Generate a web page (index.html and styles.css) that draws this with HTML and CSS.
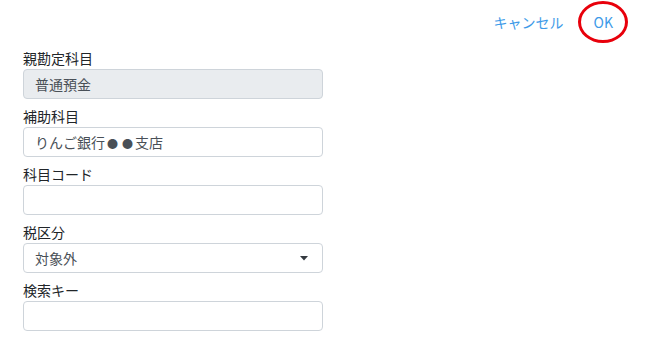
FILE: index.html
```html
<!DOCTYPE html>
<html lang="ja">
<head>
    <meta charset="UTF-8">
    <meta name="viewport" content="width=device-width, initial-scale=1.0">
    <title>補助科目</title>
    <link rel="stylesheet" href="styles.css">
</head>
<body>

<div class="toolbar">
    <button class="link-btn">キャンセル</button>
    <button class="link-btn ok">OK<span class="mark"></span></button>
</div>

<form class="form">
    <div class="group">
        <label>親勘定科目</label>
        <input type="text" class="field" value="普通預金" readonly>
    </div>
    <div class="group">
        <label>補助科目</label>
        <div class="field">りんご銀行<span class="dot">●</span><span class="dot">●</span>支店</div>
    </div>
    <div class="group">
        <label>科目コード</label>
        <input type="text" class="field">
    </div>
    <div class="group">
        <label>税区分</label>
        <div class="select">
            <span>対象外</span>
            <svg width="8" height="5" viewBox="0 0 8 5"><path d="M0 0h8L4 4.5z" fill="#343a40"/></svg>
        </div>
    </div>
    <div class="group">
        <label>検索キー</label>
        <input type="text" class="field">
    </div>
</form>

</body>
</html>
```

FILE: styles.css
```css
body {
    margin: 0;
    font-family: "Noto Sans CJK JP", "Noto Sans", sans-serif;
    font-size: 14px;
    color: #212529;
    background: #ffffff;
}
.toolbar {
    display: flex;
    justify-content: flex-end;
    align-items: center;
    height: 44px;
    padding-right: 30px;
    gap: 18px;
}
.link-btn {
    position: relative;
    border: none;
    background: none;
    padding: 0 6px;
    font-family: inherit;
    font-size: 14px;
    color: #3d9ae8;
    cursor: pointer;
}
.ok .mark {
    position: absolute;
    left: 50%;
    top: 50%;
    box-sizing: border-box;
    width: 50px;
    height: 42px;
    margin: -21px 0 0 -25px;
    border: 3px solid #e8000b;
    border-radius: 50%;
}
.form {
    margin-top: 4px;
    padding-left: 23px;
    width: 300px;
}
.group {
    margin-bottom: 7px;
}
.group label {
    display: block;
    line-height: 21px;
}
.field,
.select {
    box-sizing: border-box;
    display: block;
    width: 300px;
    height: 30px;
    padding: 0 11px;
    border: 1px solid #ced4da;
    border-radius: 4px;
    font-family: inherit;
    font-size: 14px;
    line-height: 28px;
    color: #495057;
    background: #ffffff;
    outline: none;
}
.field[readonly] {
    background: #e9ecef;
}
.dot {
    font-size: 11px;
    color: #495057;
    margin: 0 2px;
}
.select {
    display: flex;
    align-items: center;
    justify-content: space-between;
    padding-right: 14px;
}
```
